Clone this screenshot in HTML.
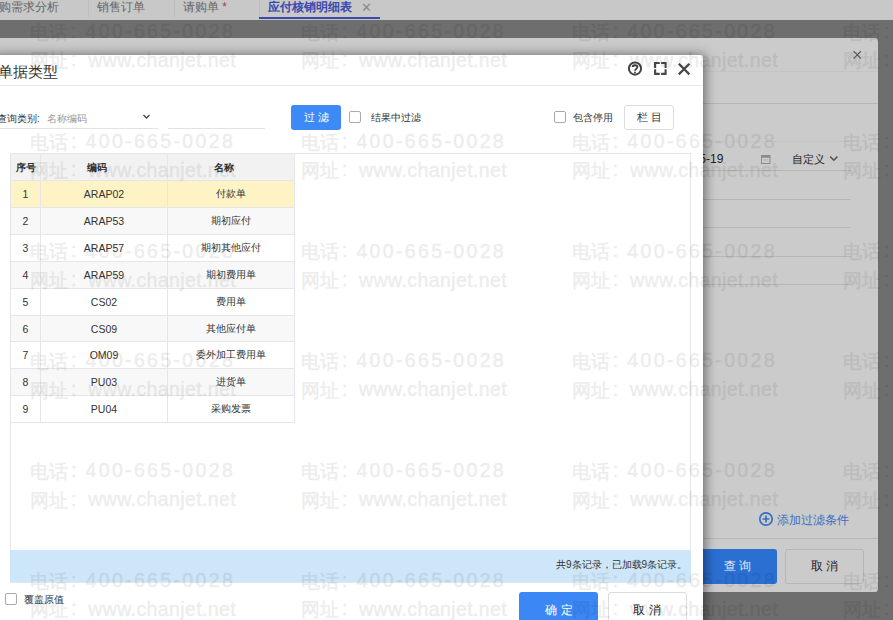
<!DOCTYPE html>
<html><head><meta charset="utf-8">
<style>
*{box-sizing:border-box;margin:0;padding:0}
html,body{width:893px;height:620px;overflow:hidden;background:#6e6e6e;font-family:"Liberation Sans",sans-serif;position:relative}
.abs{position:absolute}
#tabbar{left:0;top:0;width:893px;height:20px;background:#c8c8c8}
.tab{position:absolute;top:1px;height:20px;font-size:12px;line-height:13px;color:#666;font-weight:500;white-space:nowrap}
.sep{position:absolute;top:0;width:1px;height:17px;background:#bdbdbd}
#back{left:-20px;top:38px;width:898px;height:554px;background:#cbcbcb;border-radius:3px}
.bline{position:absolute;height:1px;background:#b6b6b6}
#front{left:-10px;top:55px;width:713px;height:580px;background:#fff;border-radius:3px;box-shadow:2px 0 12px rgba(0,0,0,0.5)}
.t{position:absolute;white-space:nowrap}
table{border-collapse:collapse;position:absolute;left:10px;top:153px;table-layout:fixed}
td,th{border:1px solid #e6e6e6;height:27px;font-size:10px;text-align:center;color:#333;font-weight:500;padding:0}
td.lat{font-weight:normal}
th{background:#f2f2f2;font-weight:bold;color:#333;font-size:10px;padding-top:2px}
td.lat{font-size:10.5px}
tr.r6 td{height:26px}
th.pr{padding-right:15px}
tr.sel td{background:#fdf3c4}
tr.ev td{background:#f8f8f8}
.wm{position:absolute;width:0;height:0;color:#000;pointer-events:none}
#wms{position:absolute;left:0;top:0;width:893px;height:620px;opacity:0.07}
.wm span{position:absolute;white-space:nowrap;font-size:19.5px;line-height:normal;-webkit-text-stroke:0.5px #000}
</style></head><body>
<div id="tabbar" class="abs">
  <div class="tab" style="left:-1px">购需求分析</div>
  <div class="sep" style="left:88px"></div>
  <div class="tab" style="left:97px">销售订单</div>
  <div class="sep" style="left:174px"></div>
  <div class="tab" style="left:183px">请购单 <span style="color:#b3344f">*</span></div>
  <div class="sep" style="left:259px"></div>
  <div class="tab" style="left:268px;color:#3a4aae;font-weight:bold">应付核销明细表</div>
  <div class="tab" style="left:361px;color:#8a8a8a;font-size:13px">✕</div>
  <div class="abs" style="left:259px;top:17px;width:121px;height:2px;background:#3a49ab"></div>
</div>

<div id="back" class="abs">
  <svg class="abs" style="left:870px;top:10px" width="14" height="14"><path d="M3.6 3.2 L11 10.6 M11 3.2 L3.6 10.6" stroke="#5c5c5c" stroke-width="1.2"/></svg>
  <div class="bline" style="left:20px;top:33px;width:878px;background:#c4c4c4"></div>
  <div class="bline" style="left:20px;top:65px;width:878px"></div>
  <div class="bline" style="left:20px;top:103px;width:851px;background:#c4c4c4"></div>
  <div class="bline" style="left:20px;top:132px;width:851px"></div>
  <div class="bline" style="left:20px;top:161px;width:851px"></div>
  <div class="bline" style="left:20px;top:189px;width:851px"></div>
  <div class="bline" style="left:20px;top:218px;width:851px"></div>
  <div class="bline" style="left:20px;top:246px;width:851px"></div>
  <div class="t" style="left:682px;top:114px;font-size:12px;color:#222;line-height:14px">2020-05-19</div>
  <svg class="abs" style="left:780px;top:116px" width="12" height="11"><rect x="1.5" y="1.5" width="8.5" height="8" fill="none" stroke="#8a8a8a" stroke-width="1"/><rect x="1.5" y="1.5" width="8.5" height="2.2" fill="#8a8a8a"/><path d="M3.5 5.9 H8" stroke="#aaa" stroke-width="0.8"/></svg>
  <div class="t" style="left:812px;top:114px;font-size:11px;color:#222;line-height:14px">自定义</div>
  <svg class="abs" style="left:849px;top:117px" width="10" height="8"><path d="M1.2 1.6 L4.8 5.2 L8.4 1.6" fill="none" stroke="#555" stroke-width="1.5"/></svg>
  <div class="bline" style="left:20px;top:500px;width:878px"></div>
  <div class="abs" style="left:717px;top:510.6px;width:80px;height:35px;background:#2b6fd2;border-radius:3px;color:#e6ecf5;font-size:12px;line-height:35px;text-align:center;letter-spacing:3px;padding-left:3px;font-weight:500">查询</div>
  <div class="abs" style="left:804.8px;top:510.6px;width:79.4px;height:35px;border:1px solid #b5b5b5;border-radius:3px;color:#222;font-size:12px;line-height:33px;text-align:center;letter-spacing:3px;padding-left:3px;font-weight:500">取消</div>
  <svg class="abs" style="left:778px;top:473px" width="16" height="16"><circle cx="8" cy="8" r="6.2" fill="none" stroke="#3a6fc4" stroke-width="1.7"/><path d="M8 4.6 V11.4 M4.6 8 H11.4" stroke="#3a6fc4" stroke-width="1.7"/></svg>
  <div class="t" style="left:797px;top:474px;font-size:12px;color:#3a6fc4">添加过滤条件</div>
</div>

<div id="front" class="abs">
  <div class="t" style="left:8px;top:7px;font-size:15px;color:#333;line-height:20px;font-weight:500">单据类型</div>
  <div class="abs" style="left:0;top:30px;width:713px;height:1px;background:#e8e8e8"></div>
  <!-- header icons -->
  <svg class="abs" style="left:630px;top:4px" width="80" height="22" viewBox="0 0 80 22">
    <circle cx="15" cy="9.6" r="6.1" fill="none" stroke="#444" stroke-width="2"/>
    <path d="M12.6 8.1 C12.6 5.6 17.4 5.6 17.4 8.1 C17.4 9.8 15 9.9 15 11.8" fill="none" stroke="#3c3c3c" stroke-width="1.8"/>
    <circle cx="15" cy="13.6" r="1" fill="#3c3c3c"/>
    <path d="M35.1 8.9 V4 H39.8 M41.1 4 H45.6 V8.9 M45.6 10.3 V14.9 H41.1 M39.8 14.9 H35.1 V10.3" fill="none" stroke="#484848" stroke-width="2.1"/>
    <path d="M58.8 4.8 L69.4 15.4 M69.4 4.8 L58.8 15.4" fill="none" stroke="#484848" stroke-width="2.2"/>
  </svg>
  <!-- filter row -->
  <div class="t" style="left:7px;top:57px;font-size:10px;color:#333;line-height:14px;font-weight:500">查询类别:</div>
  <div class="t" style="left:57px;top:57px;font-size:10px;color:#999;line-height:14px">名称编码</div>
  <svg class="abs" style="left:152px;top:58px" width="10" height="8"><path d="M1.5 2 L4.5 5 L7.5 2" fill="none" stroke="#444" stroke-width="1.3"/></svg>
  <div class="abs" style="left:0;top:73px;width:168px;height:1px;background:#e2e2e2"></div>
  <div class="abs" style="left:178px;top:73px;width:97px;height:1px;background:#e2e2e2"></div>
  <div class="abs" style="left:301px;top:50.2px;width:50px;height:24.8px;background:#3d8af6;border-radius:3px;color:#fff;font-size:11px;line-height:25px;font-weight:500;text-align:center;letter-spacing:3px;padding-left:3px">过滤</div>
  <div class="abs" style="left:359px;top:56px;width:12px;height:12px;border:1px solid #aaa;border-radius:2px"></div>
  <div class="t" style="left:381px;top:56px;font-size:10px;color:#333;line-height:14px;font-weight:500">结果中过滤</div>
  <div class="abs" style="left:564px;top:56px;width:12px;height:12px;border:1px solid #aaa;border-radius:2px"></div>
  <div class="t" style="left:583px;top:56px;font-size:10px;color:#333;line-height:14px;font-weight:500">包含停用</div>
  <div class="abs" style="left:634px;top:50.3px;width:50px;height:24.7px;border:1px solid #dcdcdc;border-radius:3px;color:#333;font-size:11px;line-height:23px;font-weight:500;text-align:center;letter-spacing:3px;padding-left:3px">栏目</div>
  <!-- grid container -->
  <div class="abs" style="left:20px;top:98px;width:681px;height:430px;border:1px solid #e6e6e6"></div>
  <div class="abs" style="left:20px;top:495px;width:681px;height:32px;background:#cde6f9"></div>
  <div class="t" style="left:566px;top:503px;font-size:10px;color:#333;line-height:14px;font-weight:500">共9条记录，已加载9条记录。</div>
  <!-- footer -->
  <div class="abs" style="left:15px;top:538px;width:12px;height:12px;border:1px solid #aaa;border-radius:2px"></div>
  <div class="t" style="left:34px;top:538px;font-size:10px;color:#333;line-height:14px;font-weight:500">覆盖原值</div>
  <div class="abs" style="left:529px;top:537px;width:79px;height:40px;background:#3b87f5;border-radius:3px;color:#fff;font-size:12px;line-height:36px;text-align:center;letter-spacing:4px;padding-left:4px">确定</div>
  <div class="abs" style="left:617.5px;top:537px;width:79px;height:40px;border:1px solid #dcdcdc;border-radius:3px;color:#222;font-size:12px;line-height:34px;text-align:center;letter-spacing:4px;padding-left:4px">取消</div>
</div>

<table>
<colgroup><col style="width:30px"><col style="width:127px"><col style="width:127px"></colgroup>
<tr><th>序号</th><th class="pr">编码</th><th class="pr">名称</th></tr>
<tr class="sel"><td class="lat">1</td><td class="lat">ARAP02</td><td>付款单</td></tr>
<tr class="ev"><td class="lat">2</td><td class="lat">ARAP53</td><td>期初应付</td></tr>
<tr><td class="lat">3</td><td class="lat">ARAP57</td><td>期初其他应付</td></tr>
<tr class="ev"><td class="lat">4</td><td class="lat">ARAP59</td><td>期初费用单</td></tr>
<tr><td class="lat">5</td><td class="lat">CS02</td><td>费用单</td></tr>
<tr class="ev r6"><td class="lat">6</td><td class="lat">CS09</td><td>其他应付单</td></tr>
<tr><td class="lat">7</td><td class="lat">OM09</td><td>委外加工费用单</td></tr>
<tr class="ev"><td class="lat">8</td><td class="lat">PU03</td><td>进货单</td></tr>
<tr><td class="lat">9</td><td class="lat">PU04</td><td>采购发票</td></tr>
</table>

<div id="wms">
<div class="wm" style="left:31.0px;top:22.8px"><span style="left:-1px;top:-3px;font-size:19px">电话</span><span style="left:40px;top:-3px">:</span><span style="left:54.5px;top:-2.9px;letter-spacing:2.35px">400-665-0028</span><span style="left:-1px;top:25.5px;font-size:19px">网址</span><span style="left:40px;top:25.5px">:</span><span style="left:57.2px;top:26.2px;letter-spacing:0.4px">www.chanjet.net</span></div>
<div class="wm" style="left:301.9px;top:22.8px"><span style="left:-1px;top:-3px;font-size:19px">电话</span><span style="left:40px;top:-3px">:</span><span style="left:54.5px;top:-2.9px;letter-spacing:2.35px">400-665-0028</span><span style="left:-1px;top:25.5px;font-size:19px">网址</span><span style="left:40px;top:25.5px">:</span><span style="left:57.2px;top:26.2px;letter-spacing:0.4px">www.chanjet.net</span></div>
<div class="wm" style="left:572.8px;top:22.8px"><span style="left:-1px;top:-3px;font-size:19px">电话</span><span style="left:40px;top:-3px">:</span><span style="left:54.5px;top:-2.9px;letter-spacing:2.35px">400-665-0028</span><span style="left:-1px;top:25.5px;font-size:19px">网址</span><span style="left:40px;top:25.5px">:</span><span style="left:57.2px;top:26.2px;letter-spacing:0.4px">www.chanjet.net</span></div>
<div class="wm" style="left:843.7px;top:22.8px"><span style="left:-1px;top:-3px;font-size:19px">电话</span><span style="left:40px;top:-3px">:</span><span style="left:54.5px;top:-2.9px;letter-spacing:2.35px">400-665-0028</span><span style="left:-1px;top:25.5px;font-size:19px">网址</span><span style="left:40px;top:25.5px">:</span><span style="left:57.2px;top:26.2px;letter-spacing:0.4px">www.chanjet.net</span></div>
<div class="wm" style="left:31.0px;top:132.6px"><span style="left:-1px;top:-3px;font-size:19px">电话</span><span style="left:40px;top:-3px">:</span><span style="left:54.5px;top:-2.9px;letter-spacing:2.35px">400-665-0028</span><span style="left:-1px;top:25.5px;font-size:19px">网址</span><span style="left:40px;top:25.5px">:</span><span style="left:57.2px;top:26.2px;letter-spacing:0.4px">www.chanjet.net</span></div>
<div class="wm" style="left:301.9px;top:132.6px"><span style="left:-1px;top:-3px;font-size:19px">电话</span><span style="left:40px;top:-3px">:</span><span style="left:54.5px;top:-2.9px;letter-spacing:2.35px">400-665-0028</span><span style="left:-1px;top:25.5px;font-size:19px">网址</span><span style="left:40px;top:25.5px">:</span><span style="left:57.2px;top:26.2px;letter-spacing:0.4px">www.chanjet.net</span></div>
<div class="wm" style="left:572.8px;top:132.6px"><span style="left:-1px;top:-3px;font-size:19px">电话</span><span style="left:40px;top:-3px">:</span><span style="left:54.5px;top:-2.9px;letter-spacing:2.35px">400-665-0028</span><span style="left:-1px;top:25.5px;font-size:19px">网址</span><span style="left:40px;top:25.5px">:</span><span style="left:57.2px;top:26.2px;letter-spacing:0.4px">www.chanjet.net</span></div>
<div class="wm" style="left:843.7px;top:132.6px"><span style="left:-1px;top:-3px;font-size:19px">电话</span><span style="left:40px;top:-3px">:</span><span style="left:54.5px;top:-2.9px;letter-spacing:2.35px">400-665-0028</span><span style="left:-1px;top:25.5px;font-size:19px">网址</span><span style="left:40px;top:25.5px">:</span><span style="left:57.2px;top:26.2px;letter-spacing:0.4px">www.chanjet.net</span></div>
<div class="wm" style="left:31.0px;top:242.4px"><span style="left:-1px;top:-3px;font-size:19px">电话</span><span style="left:40px;top:-3px">:</span><span style="left:54.5px;top:-2.9px;letter-spacing:2.35px">400-665-0028</span><span style="left:-1px;top:25.5px;font-size:19px">网址</span><span style="left:40px;top:25.5px">:</span><span style="left:57.2px;top:26.2px;letter-spacing:0.4px">www.chanjet.net</span></div>
<div class="wm" style="left:301.9px;top:242.4px"><span style="left:-1px;top:-3px;font-size:19px">电话</span><span style="left:40px;top:-3px">:</span><span style="left:54.5px;top:-2.9px;letter-spacing:2.35px">400-665-0028</span><span style="left:-1px;top:25.5px;font-size:19px">网址</span><span style="left:40px;top:25.5px">:</span><span style="left:57.2px;top:26.2px;letter-spacing:0.4px">www.chanjet.net</span></div>
<div class="wm" style="left:572.8px;top:242.4px"><span style="left:-1px;top:-3px;font-size:19px">电话</span><span style="left:40px;top:-3px">:</span><span style="left:54.5px;top:-2.9px;letter-spacing:2.35px">400-665-0028</span><span style="left:-1px;top:25.5px;font-size:19px">网址</span><span style="left:40px;top:25.5px">:</span><span style="left:57.2px;top:26.2px;letter-spacing:0.4px">www.chanjet.net</span></div>
<div class="wm" style="left:843.7px;top:242.4px"><span style="left:-1px;top:-3px;font-size:19px">电话</span><span style="left:40px;top:-3px">:</span><span style="left:54.5px;top:-2.9px;letter-spacing:2.35px">400-665-0028</span><span style="left:-1px;top:25.5px;font-size:19px">网址</span><span style="left:40px;top:25.5px">:</span><span style="left:57.2px;top:26.2px;letter-spacing:0.4px">www.chanjet.net</span></div>
<div class="wm" style="left:31.0px;top:352.2px"><span style="left:-1px;top:-3px;font-size:19px">电话</span><span style="left:40px;top:-3px">:</span><span style="left:54.5px;top:-2.9px;letter-spacing:2.35px">400-665-0028</span><span style="left:-1px;top:25.5px;font-size:19px">网址</span><span style="left:40px;top:25.5px">:</span><span style="left:57.2px;top:26.2px;letter-spacing:0.4px">www.chanjet.net</span></div>
<div class="wm" style="left:301.9px;top:352.2px"><span style="left:-1px;top:-3px;font-size:19px">电话</span><span style="left:40px;top:-3px">:</span><span style="left:54.5px;top:-2.9px;letter-spacing:2.35px">400-665-0028</span><span style="left:-1px;top:25.5px;font-size:19px">网址</span><span style="left:40px;top:25.5px">:</span><span style="left:57.2px;top:26.2px;letter-spacing:0.4px">www.chanjet.net</span></div>
<div class="wm" style="left:572.8px;top:352.2px"><span style="left:-1px;top:-3px;font-size:19px">电话</span><span style="left:40px;top:-3px">:</span><span style="left:54.5px;top:-2.9px;letter-spacing:2.35px">400-665-0028</span><span style="left:-1px;top:25.5px;font-size:19px">网址</span><span style="left:40px;top:25.5px">:</span><span style="left:57.2px;top:26.2px;letter-spacing:0.4px">www.chanjet.net</span></div>
<div class="wm" style="left:843.7px;top:352.2px"><span style="left:-1px;top:-3px;font-size:19px">电话</span><span style="left:40px;top:-3px">:</span><span style="left:54.5px;top:-2.9px;letter-spacing:2.35px">400-665-0028</span><span style="left:-1px;top:25.5px;font-size:19px">网址</span><span style="left:40px;top:25.5px">:</span><span style="left:57.2px;top:26.2px;letter-spacing:0.4px">www.chanjet.net</span></div>
<div class="wm" style="left:31.0px;top:462.0px"><span style="left:-1px;top:-3px;font-size:19px">电话</span><span style="left:40px;top:-3px">:</span><span style="left:54.5px;top:-2.9px;letter-spacing:2.35px">400-665-0028</span><span style="left:-1px;top:25.5px;font-size:19px">网址</span><span style="left:40px;top:25.5px">:</span><span style="left:57.2px;top:26.2px;letter-spacing:0.4px">www.chanjet.net</span></div>
<div class="wm" style="left:301.9px;top:462.0px"><span style="left:-1px;top:-3px;font-size:19px">电话</span><span style="left:40px;top:-3px">:</span><span style="left:54.5px;top:-2.9px;letter-spacing:2.35px">400-665-0028</span><span style="left:-1px;top:25.5px;font-size:19px">网址</span><span style="left:40px;top:25.5px">:</span><span style="left:57.2px;top:26.2px;letter-spacing:0.4px">www.chanjet.net</span></div>
<div class="wm" style="left:572.8px;top:462.0px"><span style="left:-1px;top:-3px;font-size:19px">电话</span><span style="left:40px;top:-3px">:</span><span style="left:54.5px;top:-2.9px;letter-spacing:2.35px">400-665-0028</span><span style="left:-1px;top:25.5px;font-size:19px">网址</span><span style="left:40px;top:25.5px">:</span><span style="left:57.2px;top:26.2px;letter-spacing:0.4px">www.chanjet.net</span></div>
<div class="wm" style="left:843.7px;top:462.0px"><span style="left:-1px;top:-3px;font-size:19px">电话</span><span style="left:40px;top:-3px">:</span><span style="left:54.5px;top:-2.9px;letter-spacing:2.35px">400-665-0028</span><span style="left:-1px;top:25.5px;font-size:19px">网址</span><span style="left:40px;top:25.5px">:</span><span style="left:57.2px;top:26.2px;letter-spacing:0.4px">www.chanjet.net</span></div>
<div class="wm" style="left:31.0px;top:571.8px"><span style="left:-1px;top:-3px;font-size:19px">电话</span><span style="left:40px;top:-3px">:</span><span style="left:54.5px;top:-2.9px;letter-spacing:2.35px">400-665-0028</span><span style="left:-1px;top:25.5px;font-size:19px">网址</span><span style="left:40px;top:25.5px">:</span><span style="left:57.2px;top:26.2px;letter-spacing:0.4px">www.chanjet.net</span></div>
<div class="wm" style="left:301.9px;top:571.8px"><span style="left:-1px;top:-3px;font-size:19px">电话</span><span style="left:40px;top:-3px">:</span><span style="left:54.5px;top:-2.9px;letter-spacing:2.35px">400-665-0028</span><span style="left:-1px;top:25.5px;font-size:19px">网址</span><span style="left:40px;top:25.5px">:</span><span style="left:57.2px;top:26.2px;letter-spacing:0.4px">www.chanjet.net</span></div>
<div class="wm" style="left:572.8px;top:571.8px"><span style="left:-1px;top:-3px;font-size:19px">电话</span><span style="left:40px;top:-3px">:</span><span style="left:54.5px;top:-2.9px;letter-spacing:2.35px">400-665-0028</span><span style="left:-1px;top:25.5px;font-size:19px">网址</span><span style="left:40px;top:25.5px">:</span><span style="left:57.2px;top:26.2px;letter-spacing:0.4px">www.chanjet.net</span></div>
<div class="wm" style="left:843.7px;top:571.8px"><span style="left:-1px;top:-3px;font-size:19px">电话</span><span style="left:40px;top:-3px">:</span><span style="left:54.5px;top:-2.9px;letter-spacing:2.35px">400-665-0028</span><span style="left:-1px;top:25.5px;font-size:19px">网址</span><span style="left:40px;top:25.5px">:</span><span style="left:57.2px;top:26.2px;letter-spacing:0.4px">www.chanjet.net</span></div>
</div>
</body></html>
